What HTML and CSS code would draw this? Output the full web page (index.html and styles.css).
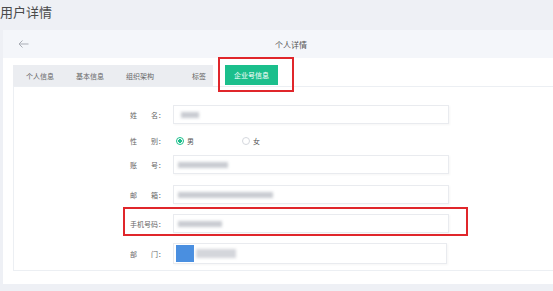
FILE: index.html
```html
<!DOCTYPE html>
<html>
<head>
    <title>用户详情</title>
    <meta charset="utf-8">
    <link rel="stylesheet" href="styles.css">
</head>
<body>
    <h1 class="page-title">用户详情</h1>

    <div class="card">
        <div class="card-head">
            <svg class="back" width="11" height="8" viewBox="0 0 11 8">
                <path d="M10.5 4H1M4.5 0.5L1 4l3.5 3.5" fill="none" stroke="#a9adb5" stroke-width="1"/>
            </svg>
            <span class="card-title">个人详情</span>
        </div>

        <div class="card-body">
            <div class="tabs">
                <div class="tab-list">
                    <span class="tab">个人信息</span>
                    <span class="tab">基本信息</span>
                    <span class="tab">组织架构</span>
                    <span class="tab tab-tag">标签</span>
                </div>
                <span class="tab-active mark">企业号信息</span>
            </div>

            <div class="panel">
                <form class="info">
                    <div class="row row-name">
                        <label class="label"><span class="label-text">姓名</span>：</label>
                        <div class="field"><i class="blur blur-name"></i></div>
                    </div>
                    <div class="row row-sex">
                        <label class="label"><span class="label-text">性别</span>：</label>
                        <label class="radio"><i class="dot checked"></i>男</label>
                        <label class="radio"><i class="dot"></i>女</label>
                    </div>
                    <div class="row row-account">
                        <label class="label"><span class="label-text">账号</span>：</label>
                        <div class="field"><i class="blur blur-account"></i></div>
                    </div>
                    <div class="row row-mail">
                        <label class="label"><span class="label-text">邮箱</span>：</label>
                        <div class="field"><i class="blur blur-mail"></i></div>
                    </div>
                    <div class="row row-phone mark">
                        <label class="label"><span class="label-text">手机号码</span>：</label>
                        <div class="field"><i class="blur blur-phone"></i></div>
                    </div>
                    <div class="row row-dept">
                        <label class="label"><span class="label-text">部门</span>：</label>
                        <div class="field field-dept"><i class="dept-icon"></i><i class="blur blur-dept"></i></div>
                    </div>
                </form>
            </div>
        </div>
    </div>
</body>
</html>
```

FILE: styles.css
```css
body {
    margin: 0;
    background: #eef0f5;
    font-family: "Noto Sans CJK SC", "Noto Sans", sans-serif;
    color: #555;
    overflow: hidden;
}
.page-title {
    margin: 0;
    height: 30px;
    line-height: 24px;
    font-size: 13px;
    font-weight: normal;
    color: #4a4a4a;
}
.card {
    margin-left: 3px;
    background: #fff;
}
.card-head {
    display: flex;
    align-items: center;
    height: 28px;
    background: #f4f6fa;
    padding-left: 15px;
}
.card-title {
    margin-left: 246px;
    font-size: 8px;
    color: #555;
}
.card-body {
    padding: 7px 0 13px 10px;
}

/* tabs */
.tabs {
    display: flex;
    height: 21px;
}
.tab-list {
    display: flex;
    align-items: center;
    gap: 22px;
    padding: 0 7px 0 13px;
    background: #ebedf1;
}
.tab {
    font-size: 7px;
    color: #666;
}
.tab-tag {
    margin-left: 16px;
}
.tab-active {
    position: relative;
    width: 53px;
    height: 20px;
    margin-left: 12px;
    background: #1bbf8c;
    color: #fff;
    font-size: 7px;
    line-height: 20px;
    text-align: center;
}
.tab-active::after {
    content: "";
    position: absolute;
    top: -8px;
    left: -7px;
    right: -16px;
    bottom: -7px;
    border: 2px solid #e0262b;
}

/* form */
.panel {
    border: 1px solid #eceff3;
    border-right: none;
}
.info {
    padding: 18px 0 6px 116px;
    font-size: 7px;
}
.row {
    position: relative;
    display: flex;
    align-items: center;
    width: max-content;
    margin-bottom: 10px;
}
.row-name {
    margin-bottom: 7px;
}
.row-sex {
    height: 19px;
    margin-bottom: 5px;
}
.row-account {
    margin-bottom: 11px;
}
.row-phone::after {
    content: "";
    position: absolute;
    top: -7px;
    left: -7px;
    right: -19px;
    bottom: -3px;
    border: 2px solid #e0262b;
}
.row-dept {
    margin-bottom: 0;
}
.label {
    display: flex;
    width: 43px;
    color: #666;
}
.label-text {
    width: 28px;
    text-align: justify;
    text-align-last: justify;
}
.field {
    display: flex;
    align-items: center;
    width: 270px;
    height: 17px;
    padding-left: 4px;
    border: 1px solid #e9ebef;
    box-shadow: 1px 1px 2px rgba(0, 0, 0, 0.04);
}
.field-dept {
    height: 19px;
    padding-left: 2px;
}
.blur {
    display: block;
    height: 6px;
    background: #c9ccd2;
    filter: blur(1.5px);
}
.blur-name {
    width: 18px;
    margin-left: 3px;
}
.blur-account {
    width: 50px;
}
.blur-mail {
    width: 95px;
}
.blur-phone {
    width: 44px;
}
.dept-icon {
    display: block;
    width: 18px;
    height: 17px;
    background: #4a8fe0;
    filter: blur(0.6px);
}
.blur-dept {
    width: 40px;
    height: 9px;
    margin-left: 2px;
    background: #d4d6db;
}

/* radios */
.radio {
    display: flex;
    align-items: center;
    width: 66px;
    color: #555;
}
.dot {
    box-sizing: border-box;
    width: 8px;
    height: 8px;
    margin: 0 3px 0 3px;
    border: 1px solid #d5d8de;
    border-radius: 50%;
}
.dot.checked {
    border-color: #1bbf8c;
    background: radial-gradient(circle, #1bbf8c 0 1.6px, #fff 2px);
}
```
